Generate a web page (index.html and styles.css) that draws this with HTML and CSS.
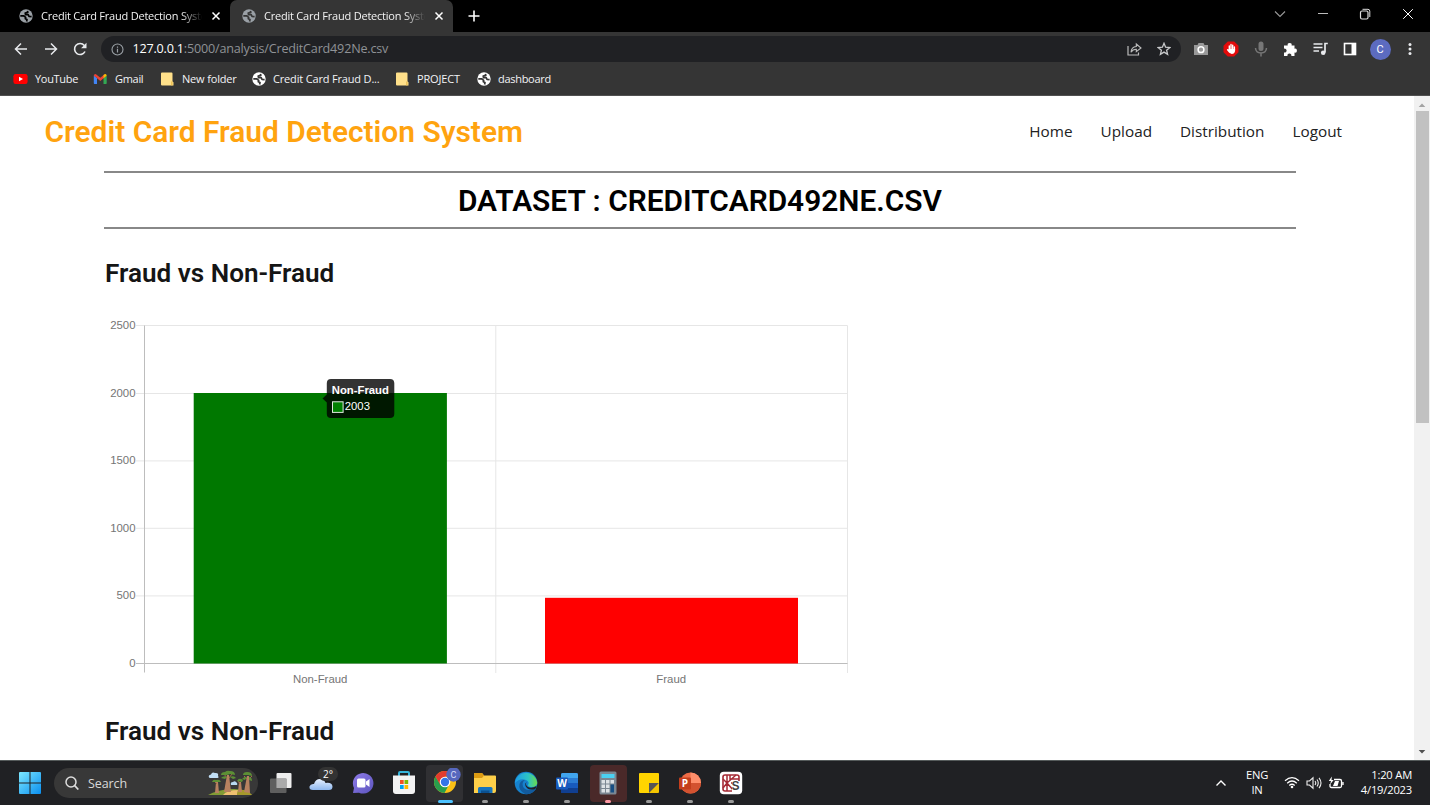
FILE: index.html
```html
<!DOCTYPE html>
<html lang="en">
<head>
<meta charset="utf-8">
<title>Credit Card Fraud Detection System</title>
<link rel="stylesheet" href="styles.css">
</head>
<body>
<svg class="defs" width="0" height="0">
  <defs>
    <symbol id="globe" viewBox="0 0 14 14"><circle cx="7" cy="7" r="6.7" fill="currentColor"/><path d="M8.500 1.800L8.800 3.400L6.200 4L6.600 5.700H9.200L10 7.300L12.600 7.600M1.300 6.800H4.600L6.700 8.400L6.300 9.800L8 10.600L7.600 12.500" fill="none" stroke="var(--cut)" stroke-width="1.700" stroke-linejoin="round"/></symbol>
    <symbol id="folder" viewBox="0 0 13 14"><path d="M0 1.500Q0 .5 1 .5H10.500Q11.500 .5 11.500 1.500V9.500L12.500 10.300V13.500H1Q0 13.500 0 12.500Z" fill="#ffe08a"/><path d="M10.200 9.500h1.300v4h-1.300z" fill="#e8b94b"/></symbol>
    <symbol id="cross" viewBox="0 0 10 10"><path d="M1.500 1.500l7 7M8.500 1.500l-7 7" stroke="currentColor" stroke-width="1.500" fill="none"/></symbol>
    <linearGradient id="win" x1="0" y1="0" x2="1" y2="1"><stop offset="0" stop-color="#7de8ff"/><stop offset="1" stop-color="#0a8ff0"/></linearGradient>
    <linearGradient id="cloud" x1="0" y1="0" x2="0" y2="1"><stop offset="0" stop-color="#e6f0ff"/><stop offset="1" stop-color="#8fb8ef"/></linearGradient>
    <linearGradient id="chat" x1="0" y1="0" x2="1" y2="1"><stop offset="0" stop-color="#8f7be8"/><stop offset="1" stop-color="#5b54bd"/></linearGradient>
    <linearGradient id="edge" x1="0" y1="0" x2="1" y2="0"><stop offset="0" stop-color="#1e9be8"/><stop offset=".6" stop-color="#2cc4c4"/><stop offset="1" stop-color="#6bdc4a"/></linearGradient>
  </defs>
</svg>

<header class="tabs">
  <div class="tab">
    <svg class="globe" width="14" height="14"><use href="#globe"/></svg>
    <span class="tab-title">Credit Card Fraud Detection Syste</span>
    <svg width="10" height="10"><use href="#cross"/></svg>
  </div>
  <div class="tab tab-active">
    <svg class="globe" width="14" height="14"><use href="#globe"/></svg>
    <span class="tab-title">Credit Card Fraud Detection Syste</span>
    <svg width="10" height="10"><use href="#cross"/></svg>
  </div>
  <svg class="new-tab" width="12" height="12" viewBox="0 0 12 12"><path d="M6 .5v11M.5 6h11" stroke="#fff" stroke-width="1.600"/></svg>
  <div class="window-controls">
    <svg width="12" height="12" viewBox="0 0 12 12"><path d="M1 3.500l5 5 5-5" fill="none" stroke="#999" stroke-width="1.100"/></svg>
    <svg width="12" height="12" viewBox="0 0 12 12"><path d="M1 5.500h10" stroke="#bbb"/></svg>
    <svg width="12" height="12" viewBox="0 0 12 12"><rect x="1.500" y="3" width="7.500" height="8" rx="1.500" fill="none" stroke="#ddd" stroke-width="1.200"/><path d="M3.500 1.300H9Q10.800 1.300 10.800 3.200V9" fill="none" stroke="#ddd"/></svg>
    <svg width="12" height="12" viewBox="0 0 12 12"><path d="M1.200 1.200l9.600 9.600M10.800 1.200l-9.600 9.600" stroke="#fff"/></svg>
  </div>
</header>

<nav class="toolbar">
  <div class="cells">
    <svg width="14" height="14" viewBox="0 0 14 14"><path d="M13 7H1.500M7 1.500L1.500 7L7 12.500" fill="none" stroke="#e8eaed" stroke-width="1.500"/></svg>
    <svg width="14" height="14" viewBox="0 0 14 14"><path d="M1 7h11.500M7 1.500L12.500 7L7 12.500" fill="none" stroke="#e8eaed" stroke-width="1.500"/></svg>
    <svg width="14" height="14" viewBox="0 0 14 14"><path d="M12 9.500A5.500 5.500 0 1 1 11.300 3.500" fill="none" stroke="#e8eaed" stroke-width="1.600"/><path d="M13.500 .8V6.200H8.100Z" fill="#e8eaed"/></svg>
  </div>
  <div class="omnibox">
    <svg width="13" height="13" viewBox="0 0 13 13"><circle cx="6.500" cy="6.500" r="5.500" fill="none" stroke="#9aa0a6" stroke-width="1.100"/><path d="M6.500 5.800v3.700M6.500 3.400v1.300" stroke="#9aa0a6" stroke-width="1.200"/></svg>
    <span class="url"><b>127.0.0.1</b>:5000/analysis/CreditCard492Ne.csv</span>
    <svg width="15" height="14" viewBox="0 0 15 14"><path d="M1 4v9h10.500v-2.500" fill="none" stroke="#bbb" stroke-width="1.200"/><path d="M4 10.200Q4.500 4.700 9.300 4.500V2L14 6L9.300 9.700V7.300Q6 7.200 4 10.200Z" fill="none" stroke="#bbb" stroke-width="1.100"/></svg>
    <svg class="star" width="14" height="14" viewBox="0 0 14 14"><path d="M7 1.300L8.600 5.200L12.900 5.500L9.600 8.200L10.600 12.400L7 10.100L3.400 12.400L4.400 8.200L1.100 5.500L5.400 5.200Z" fill="none" stroke="#c8c9cb" stroke-width="1.300"/></svg>
  </div>
  <div class="cells">
    <svg width="16" height="14" viewBox="0 0 16 14"><path d="M1 3H4.500L5.500 1H10.500L11.500 3H15V13H1Z" fill="#999"/><circle cx="8" cy="7.700" r="2.900" fill="#999" stroke="#fff" stroke-width="1.500"/></svg>
    <svg width="16" height="16" viewBox="0 0 16 16"><path d="M4.800 .5H11.200L15.500 4.800V11.200L11.200 15.500H4.800L.5 11.200V4.800Z" fill="#e30b0b"/><path d="M6.300 5V9M8 3.500V8M9.700 4.300V8M4.600 8.800L6.500 11M11.400 6V9" stroke="#fff" stroke-width="1.400" stroke-linecap="round"/><path d="M5.600 8H12.100V10Q11.500 13 8.800 13Q6.500 13 5.600 10Z" fill="#fff"/></svg>
    <svg width="14" height="16" viewBox="0 0 14 16"><rect x="4.500" y=".5" width="5" height="9.500" rx="2.500" fill="#777"/><path d="M1.500 7Q1.800 12 7 12Q12.200 12 12.500 7M7 12v3.500" fill="none" stroke="#777" stroke-width="1.500"/></svg>
    <svg width="15" height="15" viewBox="0 0 15 15"><path d="M1 3.500H4.700A2 2 0 1 1 8.600 3.500H11.500V6.700A2 2 0 1 1 11.500 10.600V14H8.300A2 2 0 1 0 4.500 14H1V10.500A2 2 0 1 0 1 6.700Z" fill="#fff"/></svg>
    <svg width="15" height="14" viewBox="0 0 15 14"><path d="M.5 2h9M.5 5.500h9M.5 9h5.500M14.800 1.500H12V10.500" fill="none" stroke="#e8eaed" stroke-width="1.700"/><circle cx="10.200" cy="10.700" r="2.300" fill="#e8eaed"/></svg>
    <svg width="14" height="14" viewBox="0 0 14 14"><rect x="1.500" y="1.500" width="11" height="11" fill="none" stroke="#fff" stroke-width="1.600"/><path d="M8.500 1h4.500v12H8.500z" fill="#fff"/></svg>
    <span class="avatar">C</span>
    <svg width="4" height="14" viewBox="0 0 4 14"><g fill="#e8eaed"><circle cx="2" cy="2.500" r="1.500"/><circle cx="2" cy="7" r="1.500"/><circle cx="2" cy="11.500" r="1.500"/></g></svg>
  </div>
</nav>

<nav class="bookmarks">
  <div class="bookmark"><svg width="15" height="14" viewBox="0 0 15 14"><rect x=".4" y="2" width="14.200" height="10" rx="2.300" fill="#f00"/><path d="M6 4.800L10 7L6 9.200Z" fill="#fff"/></svg><span>YouTube</span></div>
  <div class="bookmark"><svg width="15" height="14" viewBox="0 0 15 14"><path d="M.8 3.500L4 6V12H1.500Q.8 12 .8 11.300Z" fill="#4285f4"/><path d="M10.500 6L13.700 3.500V11.300Q13.700 12 13 12H10.500Z" fill="#34a853"/><path d="M.8 3.700Q1.200 1.500 3 2.300L7.300 5.700L11.500 2.300V5.500L7.300 9L4 6.300V6L.8 3.800Z" fill="#ea4335"/><path d="M10.500 3L11.500 2.300Q13.500 1.500 13.700 3.800L10.500 6.200Z" fill="#fbbc04"/></svg><span>Gmail</span></div>
  <div class="bookmark wide"><svg width="13" height="14"><use href="#folder"/></svg><span>New folder</span></div>
  <div class="bookmark wide"><svg class="globe-light" width="14" height="14"><use href="#globe"/></svg><span>Credit Card Fraud D...</span></div>
  <div class="bookmark wide"><svg width="13" height="14"><use href="#folder"/></svg><span>PROJECT</span></div>
  <div class="bookmark"><svg class="globe-light" width="14" height="14"><use href="#globe"/></svg><span>dashboard</span></div>
</nav>

<div class="viewport">
  <main class="page">
    <div class="site-header">
      <h1 class="brand">Credit Card Fraud Detection System</h1>
      <nav class="menu"><a>Home</a><a>Upload</a><a>Distribution</a><a>Logout</a></nav>
    </div>
    <div class="dataset">DATASET : CREDITCARD492NE.CSV</div>
    <h2 class="section-title">Fraud vs Non-Fraud</h2>
    <svg class="chart" width="750" height="392" viewBox="104 308 750 392">
      <g stroke="#e6e6e6">
        <path d="M136 325.500H847.500M136 393.500H847.500M136 460.900H847.500M136 528.300H847.500M136 595.900H847.500"/>
        <path d="M495.800 325.500V673M847.500 325.500V673"/>
      </g>
      <path d="M136 663.500H847.500M144.500 325.500V672.500" stroke="#bdbdbd" fill="none"/>
      <rect x="193.700" y="393" width="253.200" height="270.500" fill="#007800"/>
      <rect x="545" y="597.800" width="253" height="65.700" fill="#f00"/>
      <g class="axis" text-anchor="end">
        <text x="135.500" y="329">2500</text><text x="135.500" y="397">2000</text><text x="135.500" y="464">1500</text><text x="135.500" y="532">1000</text><text x="135.500" y="599">500</text><text x="135.500" y="667">0</text>
      </g>
      <g class="axis" text-anchor="middle"><text x="320.200" y="683">Non-Fraud</text><text x="671.200" y="683">Fraud</text></g>
      <path d="M331 379H390Q394.300 379 394.300 383.300V413.700Q394.300 418 390 418H331Q326.800 418 326.800 413.700V402.500L322.500 398.500L326.800 394.500V383.300Q326.800 379 331 379Z" fill-opacity=".8"/>
      <rect x="332.500" y="401.800" width="10.600" height="10.600" fill="#008000" stroke="#dfe8df"/>
      <text class="tip tip-title" x="331.800" y="393.500">Non-Fraud</text>
      <text class="tip" x="344.800" y="410">2003</text>
    </svg>
    <h2 class="section-title">Fraud vs Non-Fraud</h2>
  </main>
  <div class="scrollbar">
    <svg width="8" height="15" viewBox="0 0 8 15"><path d="M.7 11L4 7.500L7.300 11Z" fill="#a3a3a3"/></svg>
    <div class="thumb"></div>
    <svg class="scroll-down" width="8" height="15" viewBox="0 0 8 15"><path d="M.7 5L4 8.500L7.300 5Z" fill="#505050"/></svg>
  </div>
</div>

<footer class="taskbar">
  <svg class="start" width="22" height="22" viewBox="0 0 22 22"><path d="M0 1Q0 0 1 0H10.500V10.500H0ZM11.500 0H21Q22 0 22 1V10.500H11.500ZM0 11.500H10.500V22H1Q0 22 0 21ZM11.500 11.500H22V21Q22 22 21 22H11.500Z" fill="url(#win)"/></svg>
  <div class="search">
    <svg width="14" height="14" viewBox="0 0 14 14"><circle cx="6" cy="6" r="5" fill="none" stroke="#ddd" stroke-width="1.500"/><path d="M9.700 9.700L13.300 13.500" stroke="#ddd" stroke-width="1.700"/></svg>
    <span>Search</span>
    <svg class="trees" width="46" height="26" viewBox="0 0 46 26">
      <path d="M1 25Q10 20 24 19Q38 18 45 25Z" fill="#829c35"/><path d="M16 25Q20 20 31 20L30 25Z" fill="#efc070"/><path d="M30 25L31 20Q40 19 45 25Z" fill="#a6992c"/>
      <path d="M8 23L9 12H11L12 23ZM17 22L20 5H22L24 22ZM31 22L32 12H34L35 22ZM37 22L40 6H42L43 23Z" fill="#b88260"/>
      <path d="M20 8l-3-4M22 8l3-4M10 14l-3-3M40 9l-3-3M42 9l3-3M33 14l-2-3" stroke="#a46c4c"/>
      <path d="M14 5Q14 2 18 2Q20 0 23 1Q28 1 28 5L23 4L20 5ZM36 5Q36 2 40 2Q45 2 45 6L41 5ZM5 12Q6 9 9 10Q13 9 14 12L10 12ZM30 11Q32 7 36 10L35 12ZM14 8Q17 5 20 7L18 9ZM35 9Q38 6 40 7L38 10ZM23 7Q27 5 29 8L26 9ZM42 7Q45 7 45 11L42 10Z" fill="#5c8f35"/>
      <path d="M2 7.500Q1 5 4 4.500Q5 1.500 8 3Q12 2.500 11 6Q13 8 9 8H3Z" fill="#c1def5"/><path d="M24 15Q23 12 26 12Q28 10 30 13Q31 15 29 15Z" fill="#b9d9f0"/>
    </svg>
  </div>
  <div class="apps">
    <div class="app"><svg width="24" height="22" viewBox="0 0 24 22"><rect x="7.500" y="1" width="15" height="15" rx="1" fill="#eee"/><rect x="1" y="6.500" width="16.500" height="14.500" rx="1" fill="#666" fill-opacity=".9"/><path d="M7.500 6.500h10V16h-10z" fill="#aaa"/></svg></div>
    <div class="app"><svg class="weather" width="30" height="28" viewBox="0 0 30 28"><path d="M4 23Q0 23 .5 19.500Q1.500 16.500 5 17Q6.500 12 11 12Q15 12 16.500 16Q23 15 23.500 19.500Q23.500 23 20 23Z" fill="url(#cloud)"/><rect x="9" y="0" width="20" height="14" rx="7" fill="#333"/><text class="badge-text" x="14" y="11">2°</text></svg></div>
    <div class="app"><svg width="22" height="22" viewBox="0 0 22 22"><path d="M1 21L2 16A10.300 10.300 0 1 1 7 20.700Z" fill="url(#chat)"/><rect x="5" y="6.500" width="8.500" height="9" rx="1.500" fill="#fff"/><path d="M14 9.500L17.500 7V15L14 12.500Z" fill="#fff"/></svg></div>
    <div class="app"><svg width="24" height="24" viewBox="0 0 24 24"><path d="M7 5V2Q7 1 8 1H16Q17 1 17 2V5" fill="none" stroke="#36b5dc" stroke-width="2"/><path d="M1 4.500H23V20Q23 23 20 23H4Q1 23 1 20Z" fill="#f3f3f3"/><path d="M8 9h3.700v4H8z" fill="#f25022"/><path d="M12.500 9h3.700v4h-3.700z" fill="#7fba00"/><path d="M8 14h3.700v4H8z" fill="#00a4ef"/><path d="M12.500 14h3.700v4h-3.700z" fill="#ffb900"/></svg></div>
    <div class="app app-current"><svg width="28" height="26" viewBox="0 0 28 26"><circle cx="12" cy="14" r="11" fill="#fbc116"/><path d="M2.470 8.500L7.700 16.700Q9 18.600 12 19L15.500 17.500L11.500 25A11 11 0 0 1 2.470 8.500Z" fill="#289e4d"/><path d="M12 8.500H21.530A11 11 0 0 0 2.470 8.500L7.200 16.700Z" fill="#e33b2e"/><circle cx="12" cy="14" r="5.300" fill="#fff"/><circle cx="12" cy="14" r="4.200" fill="#3475e8"/><circle cx="20.500" cy="6.500" r="7.200" fill="#5667bd"/><text class="badge-c" x="20.500" y="10" text-anchor="middle">C</text></svg><i class="run run-wide"></i></div>
    <div class="app"><svg width="24" height="22" viewBox="0 0 24 22"><path d="M1 2Q1 1 2 1H9L11 3.500H22Q23 3.500 23 4.500V19Q23 21 21 21H1Z" fill="#fdcf49"/><path d="M1 2Q1 1 2 1H9L11 3.500L9 6H1Z" fill="#dc9b12"/><path d="M5 21V16.500Q5 15 6.500 15H18Q19.500 15 19.500 16.500V21Z" fill="#1674bd"/><path d="M8 18.500h8.500v2.500H8z" fill="#0b5090"/></svg><i class="run"></i></div>
    <div class="app"><svg width="24" height="24" viewBox="0 0 24 24"><circle cx="12" cy="12" r="11.300" fill="#1682ce"/><path d="M.8 12A11.300 11.300 0 0 1 23.300 12Q22.500 16 18 16Q14 16 14 14Q16 11 12 9Q6 6.500 .8 12Z" fill="url(#edge)"/><path d="M11 9Q7.500 11 9 15.500Q11.500 21 21 17.500L22 18Q18 24 11 23Q4 19 5.500 13Q7 9 11 9Z" fill="#125b9d"/><path d="M12.500 11Q11 14 14 16Q17.500 18 22.500 15Q22 18 21 18Q14 20 11.500 15Q10.500 12.500 12.500 11Z" fill="#202127"/></svg><i class="run"></i></div>
    <div class="app"><svg width="24" height="22" viewBox="0 0 24 22"><rect x="6" y="1" width="17" height="20" rx="1.500" fill="#185abd"/><path d="M6 2.500Q6 1 7.500 1H21.500Q23 1 23 2.500V6H6Z" fill="#41a5ee"/><path d="M6 6h17v5H6z" fill="#2b7cd3"/><path d="M6 16h17v3.500Q23 21 21.500 21H7.500Q6 21 6 19.500z" fill="#103f91"/><rect x="1" y="5.500" width="12" height="12" rx="1" fill="#185abd"/><text class="office" x="7" y="14.700" text-anchor="middle">W</text></svg><i class="run"></i></div>
    <div class="app app-alert"><svg width="18" height="24" viewBox="0 0 18 24"><rect x=".5" y=".5" width="17" height="23" rx="1.500" fill="#7b8792"/><path d="M2.500 3h13v4h-13z" fill="#4bd1f2"/><g fill="#dce1e5"><path d="M2.500 9h3.500v3.500H2.500zM7 9h3.500v3.500H7zM11.500 9H15v3.500h-3.500zM2.500 13.500h3.500V17H2.500zM7 13.500h3.500V17H7zM2.500 18h3.500v3.500H2.500zM7 18h3.500v3.500H7z"/></g><path d="M11.500 13.500H15v8h-3.500z" fill="#174e83"/></svg><i class="run run-alert"></i></div>
    <div class="app"><svg width="20" height="20" viewBox="0 0 20 20"><path d="M0 1Q0 0 1 0H19Q20 0 20 1V10L10 20H1Q0 20 0 19Z" fill="#ffd400"/><path d="M10 20V10H20Z" fill="#555"/><path d="M20 10V19Q20 20 19 20H10Z" fill="#f4c500"/></svg><i class="run"></i></div>
    <div class="app"><svg width="24" height="22" viewBox="0 0 24 22"><circle cx="12.500" cy="11" r="10.500" fill="#ed6c47"/><path d="M12.500 .5A10.500 10.500 0 0 1 23 11H12.500Z" fill="#ff8f6b"/><path d="M2 11H23A10.500 10.500 0 0 1 2 11Z" fill="#d35230"/><rect x="1" y="5.500" width="12" height="12" rx="1" fill="#c43e1c"/><text class="office" x="7" y="14.700" text-anchor="middle">P</text></svg><i class="run"></i></div>
    <div class="app"><svg width="24" height="24" viewBox="0 0 24 24"><rect x=".8" y=".8" width="22.400" height="22.400" rx="4" fill="#fff"/><rect x="4" y="4" width="16" height="16" rx="2" fill="none" stroke="#a52a35" stroke-width="1.600"/><path d="M8 4V20M17 4L8 12L15 20M4 8L8 12L4 17M11 4V8H20M12 12H20" fill="none" stroke="#a52a35" stroke-width="1.500"/><path d="M13 10H22V21H13Z" fill="#fff"/><text class="ks" x="12.500" y="19">S</text></svg><i class="run"></i></div>
  </div>
  <div class="tray">
    <svg width="12" height="12" viewBox="0 0 12 12"><path d="M1.500 8.500L6 4L10.500 8.500" fill="none" stroke="#fff" stroke-width="1.400"/></svg>
    <div class="lang">ENG<br>IN</div>
    <div class="status">
      <svg width="16" height="13" viewBox="0 0 16 13"><path d="M1 4.800Q8-1.500 15 4.800M3.200 7.200Q8 2.800 12.800 7.200M5.300 9.500Q8 7 10.700 9.500" fill="none" stroke="#fff" stroke-width="1.200"/><circle cx="8" cy="11" r="1.300" fill="#fff"/></svg>
      <svg width="16" height="14" viewBox="0 0 16 14"><path d="M1 5H3.500L7 1.800V12.200L3.500 9H1ZM9 5Q10.500 7 9 9M11 3.500Q13.500 7 11 10.500M13 1.800Q17 7 13 12.200" fill="none" stroke="#eee" stroke-width="1.100"/></svg>
      <svg width="16" height="14" viewBox="0 0 16 14"><path d="M6 3.500H12Q13.500 3.500 13.500 5V10Q13.500 11.500 12 11.500H3.500Q2 11.500 2 10V8M15 6v3" fill="none" stroke="#fff" stroke-width="1.300"/><path d="M5 10L7 5H11L9.500 10Z" fill="#fff"/><path d="M3.800 .5L.8 5H3L2 8.500L5.700 4H3.500Z" fill="#fff"/></svg>
    </div>
    <div class="clock">1:20 AM<br>4/19/2023</div>
  </div>
</footer>
</body>
</html>
```
FILE: styles.css
```css
* { box-sizing: border-box; }
body {
  margin: 0;
  width: 1430px;
  height: 805px;
  overflow: hidden;
  display: flex;
  flex-direction: column;
  background: #fff;
  font-family: "Open Sans", "Noto Sans", sans-serif;
}
svg { display: block; flex: none; }
.defs { position: absolute; }

/* Browser chrome */
.tabs { height: 32px; background: #000; display: flex; align-items: center; }
.tab {
  width: 230px;
  height: 32px;
  padding: 0 9px 0 19px;
  display: flex;
  align-items: center;
  color: #fff;
  --cut: #000;
}
.tab-active { width: 223px; background: #353535; border-radius: 7px 7px 0 0; padding: 0 9px 0 12px; --cut: #353535; }
.globe { color: #9aa0a6; }
.tab-title {
  width: 164px;
  margin: -2px 7px 0 8px;
  overflow: hidden;
  white-space: nowrap;
  font-size: 11px;
  letter-spacing: -0.22px;
  color: #f2f2f2;
  -webkit-mask-image: linear-gradient(90deg, #000 86%, transparent 99%);
  mask-image: linear-gradient(90deg, #000 86%, transparent 99%);
}
.new-tab { margin-left: 15px; }
.window-controls { margin: -4px 1px 0 auto; width: 170px; display: grid; grid-template-columns: repeat(4, 1fr); justify-items: center; }

.toolbar { height: 34px; background: #353535; display: flex; align-items: center; padding-left: 6px; }
.cells { display: grid; grid-auto-flow: column; grid-auto-columns: 29.8px; align-items: center; justify-items: center; }
.omnibox {
  width: 1080px;
  height: 26px;
  margin: 0 5px 0 6px;
  padding: 0 10px;
  border-radius: 13px;
  background: #202124;
  display: flex;
  align-items: center;
}
.url { flex: 1; margin: -1px 0 0 8px; font-size: 12.6px; letter-spacing: -0.19px; color: #8f9296; white-space: nowrap; }
.url b { color: #fff; font-weight: 400; }
.star { margin-left: 15px; }
.avatar { width: 21px; height: 21px; border-radius: 50%; background: #5c6bc0; color: #fff; text-align: center; font: 11px/21px Roboto, sans-serif; }

.bookmarks {
  height: 30px;
  padding: 0 0 4px 13px;
  background: #353535;
  border-bottom: 1px solid #505050;
  display: grid;
  grid-template-columns: 80px 68px 91px 144px 81px 100px;
  align-items: center;
}
.bookmark { display: flex; align-items: center; gap: 7px; color: #f2f3f5; font-size: 11px; letter-spacing: -0.3px; white-space: nowrap; --cut: #353535; }
.bookmark span { margin-top: -1px; }
.wide { letter-spacing: -0.17px; }
.wide svg[width="13"] { margin-right: 1px; }
.globe-light { color: #fff; }

/* Page */
.viewport { height: 664px; display: flex; }
.page { width: 1414px; overflow: hidden; background: #fff; }
.site-header { height: 70px; padding: 0 72px 0 44.500px; display: flex; align-items: center; justify-content: space-between; }
.brand { margin: 1px 0 0; font: 600 29.9px/36px Roboto, sans-serif; color: #ffa30f; white-space: nowrap; }
.menu { display: flex; gap: 28px; margin-top: -1px; font-size: 15.3px; color: #222; }
.dataset {
  width: 1192px;
  height: 58px;
  margin: 4.500px 0 0 104px;
  border: solid #888;
  border-width: 2px 0;
  text-align: center;
  font: 600 29.9px/56px Roboto, sans-serif;
  color: #000;
}
.section-title { margin: 27.500px 0 0 105px; font: 600 26.1px/34px Roboto, sans-serif; color: #151515; }
.chart { margin: 18px 0 0 104px; }
.chart + .section-title { margin-top: 14px; }
.axis { font: 11.4px "Liberation Sans", Arial, sans-serif; fill: #757575; }
.tip { font: 11.3px "Liberation Sans", Arial, sans-serif; fill: #fff; }
.tip-title { font-weight: 700; }
.scrollbar { width: 16px; background: #f1f1f1; display: flex; flex-direction: column; align-items: center; }
.thumb { width: 13px; height: 312px; background: #c1c1c1; }
.scroll-down { margin-top: auto; }

/* Desktop taskbar */
.taskbar { height: 45px; background: #202124; border-top: 1px solid #555b5b; display: flex; align-items: center; color: #fff; }
.start { margin-left: 19px; }
.search { width: 204px; height: 30px; margin-left: 13px; padding: 0 5px 0 11px; border-radius: 15px; background: #383838; display: flex; align-items: center; font-size: 12.5px; letter-spacing: -0.1px; color: #d8d8d8; }
.search span { margin-left: 9px; }
.trees { margin-left: auto; }
.apps { margin-left: 2.500px; display: grid; grid-template-columns: repeat(12, 40.900px); }
.app { position: relative; height: 37px; display: flex; align-items: center; justify-content: center; }
.app-current, .app-alert { width: 37px; margin-left: 2px; border-radius: 4px; background: #303033; }
.app-current svg { margin: -5px 0 0 4px; }
.app-alert { background: #4a2929; }
.weather { margin: -4px 0 0 4px; }
.run { position: absolute; bottom: -1px; left: 50%; width: 6px; height: 3px; margin-left: -3px; border-radius: 2px; background: #999; }
.run-wide { width: 15px; margin-left: -7px; background: #4cc2ff; }
.run-alert { background: #ff9aa5; }
.badge-text { font: 10px "Open Sans", sans-serif; fill: #fff; }
.badge-c { font: 9px Roboto, sans-serif; fill: #d7dcf5; }
.office { font: 700 10px "Open Sans", sans-serif; fill: #fff; }
.ks { font: 700 12px "Liberation Sans", sans-serif; fill: #444; }
.tray { margin-left: auto; padding-right: 18px; display: flex; align-items: center; font-size: 11.2px; line-height: 15px; letter-spacing: -0.2px; }
.tray .lang, .tray .clock { margin-top: -2px; }
.lang { width: 30px; margin-left: 15px; text-align: center; }
.status { display: flex; gap: 6px; margin-left: 12px; }
.clock { width: 58px; margin-left: 10px; text-align: right; white-space: nowrap; }
```
